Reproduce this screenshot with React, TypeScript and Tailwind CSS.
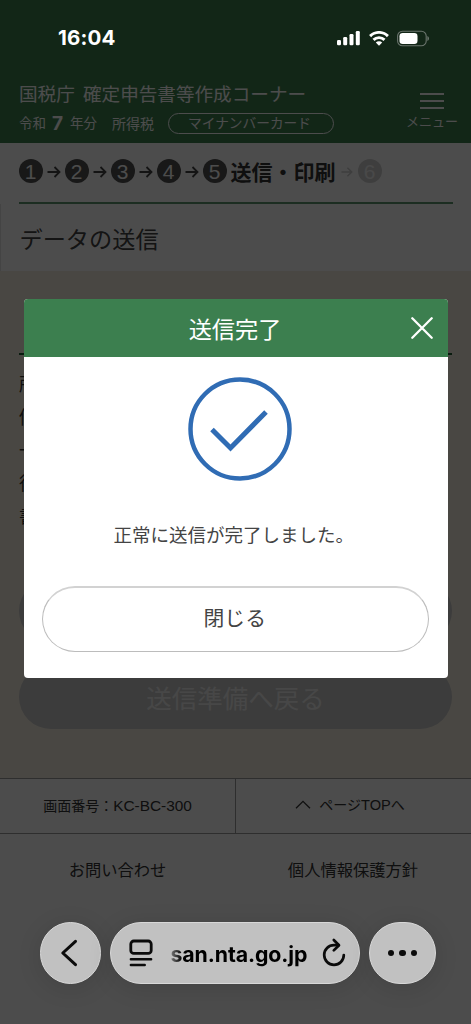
import { Fragment } from "react";

const steps = [1, 2, 3, 4, 5];
const bodyLines = ["所", "修", "一", "後", "書"];

function StepNumber({ value, muted = false }: { value: number; muted?: boolean }) {
  return (
    <div
      className={
        muted
          ? "flex size-6 shrink-0 items-center justify-center rounded-full bg-[#d0d0d0] text-[21px] leading-none text-[#f4f4f4]"
          : "flex size-6 shrink-0 items-center justify-center rounded-full bg-[#505050] text-[21px] leading-none text-white"
      }
    >
      <span className="font-['Liberation_Sans',sans-serif]">{value}</span>
    </div>
  );
}

function StepArrow({ className }: { className: string }) {
  return (
    <svg viewBox="0 0 14 12" className={className} fill="none" stroke="currentColor" strokeWidth="1.8">
      <path d="M0.5 6h12M7.5 1l5 5-5 5" />
    </svg>
  );
}

function StatusBar() {
  return (
    <div className="absolute inset-x-0 top-0 flex h-[76px] items-center justify-between pr-[41px] pl-[58px] text-white">
      <span className="pt-px font-['Inter',sans-serif] text-[20.5px] leading-none font-bold tracking-[0.2px]">16:04</span>
      <div className="flex items-center">
        <svg width="24" height="16" viewBox="0 0 24 16" fill="currentColor">
          <rect x="0" y="10" width="4" height="5.3" rx="1.2" />
          <rect x="6.2" y="7" width="4" height="8.3" rx="1.2" />
          <rect x="12.5" y="4" width="4" height="11.3" rx="1.2" />
          <rect x="18.8" y="1" width="4" height="14.3" rx="1.2" />
        </svg>
        <svg width="20" height="15" viewBox="0 0 20 15" className="ml-2" fill="none" stroke="currentColor" strokeWidth="2.9">
          <path d="M1.1 5.1a12.6 12.6 0 0 1 17.8 0" />
          <path d="M4.5 8.9a7.8 7.8 0 0 1 11 0" />
          <path d="M10 14.8 6.8 11.6a4.5 4.5 0 0 1 6.4 0z" fill="currentColor" stroke="none" />
        </svg>
        <svg width="33" height="17" viewBox="0 0 33 17" className="ml-2">
          <rect x="0.6" y="1.2" width="28.6" height="14.6" rx="4.8" fill="none" stroke="#6b756e" strokeWidth="1.1" />
          <rect x="2.5" y="3" width="18" height="11" rx="3.2" fill="#fff" />
          <path d="M30.4 6v5c1-.4 1.6-1.4 1.6-2.5S31.4 6.4 30.4 6z" fill="#6b756e" />
        </svg>
      </div>
    </div>
  );
}

function Dialog() {
  return (
    <div className="absolute top-[299px] left-[23.5px] h-[379px] w-[424px] overflow-hidden rounded-[4px] bg-white text-[#444]">
      <div className="relative flex h-[57.5px] items-center justify-center bg-[#3c7f4f] pt-px pr-px text-[23.2px] leading-none text-white">
        <h2>送信完了</h2>
        <svg
          viewBox="0 0 22 22"
          className="absolute top-[18px] right-[15px] size-[22px]"
          stroke="currentColor"
          strokeWidth="2.3"
          strokeLinecap="round"
        >
          <path d="M1.3 1.3l19.4 19.4M20.7 1.3 1.3 20.7" />
        </svg>
      </div>
      <div className="flex flex-col items-center pr-[19px] pl-[18.5px]">
        <svg width="104" height="104" viewBox="0 0 104 104" className="mt-[20.5px] ml-[10px]" fill="none" stroke="#306cb4">
          <circle cx="52" cy="52" r="49.5" strokeWidth="4.5" />
          <path d="M24 52.5 42.5 71 78 35" strokeWidth="5" />
        </svg>
        <p className="mt-[42.5px] mr-[3px] h-[20px] text-[18.5px] leading-[20px] whitespace-nowrap">正常に送信が完了しました。</p>
        <button className="mt-[42.5px] h-[66px] w-full rounded-full border border-t-2 border-[#bcbcbc] border-t-[#d2d2d2] pr-px pb-[4px] text-[20.8px] leading-none">
          閉じる
        </button>
      </div>
    </div>
  );
}

function BrowserBar() {
  return (
    <div className="absolute inset-x-0 top-[922px] flex h-[62px] justify-start gap-[9px] pl-[39.5px] text-[#0b0b0b]">
      <div className="flex w-[61.5px] items-center justify-center rounded-full border border-[#d8d8d8] bg-[#c1c1c1] pr-[3px] shadow-[0_4px_24px_rgba(0,0,0,0.12)]">
        <svg width="18" height="28" viewBox="0 0 18 28" fill="none" stroke="currentColor" strokeWidth="3" strokeLinecap="round" strokeLinejoin="round">
          <path d="M15.5 2.3 2.8 14l12.7 11.7" />
        </svg>
      </div>
      <div className="flex w-[250px] items-center rounded-full border border-[#d8d8d8] bg-[#c1c1c1] pl-[18px] shadow-[0_4px_24px_rgba(0,0,0,0.12)]">
        <svg width="24" height="28" viewBox="0 0 24 28" fill="none" stroke="currentColor" strokeWidth="2.8" strokeLinecap="round">
          <rect x="1.8" y="2" width="20.4" height="12.4" rx="3" />
          <path d="M1.9 20.3h20.2M1.9 26h13.8" strokeWidth="2.5" />
        </svg>
        <span className="ml-[17.5px] w-[140px] bg-linear-to-r from-[#777] to-[#000] to-10% bg-clip-text pt-px font-['Inter',sans-serif] text-[21.3px] leading-[30px] font-bold tracking-[-0.1px] whitespace-nowrap text-transparent">
          san.nta.go.jp
        </span>
        <svg width="24" height="29" viewBox="0 0 24 29" className="mb-[2px] ml-[11.5px]" fill="none" stroke="currentColor" strokeWidth="2.7" strokeLinecap="round" strokeLinejoin="round">
          <path d="M16.5 7.2H12a9.8 9.8 0 1 0 9.8 9.8" />
          <path d="M11.8 2l5.2 5.2-5.2 5.2" />
        </svg>
      </div>
      <div className="flex w-[67px] items-center justify-center gap-[5px] rounded-full border border-[#d8d8d8] bg-[#c1c1c1] shadow-[0_4px_24px_rgba(0,0,0,0.12)]">
        <i className="size-[6.5px] rounded-full bg-current" />
        <i className="size-[6.5px] rounded-full bg-current" />
        <i className="size-[6.5px] rounded-full bg-current" />
      </div>
    </div>
  );
}

export default function App() {
  return (
    <div className="relative h-[1024px] w-[471px] overflow-hidden bg-white font-['Noto_Sans_CJK_JP',sans-serif] leading-none text-[#444]">
      {/* Header */}
      <header className="flex h-[143px] justify-between bg-[#3c7f4f] pt-[83px] pr-[13px] pl-[19px] text-white">
        <div>
          <h1 className="h-5 text-[18.6px] leading-5 whitespace-nowrap [word-spacing:4px]">国税庁 確定申告書等作成コーナー</h1>
          <div className="mt-[10px] flex h-[21px] items-center whitespace-nowrap">
            <span className="pb-px text-[13.5px]">令和</span>
            <span className="mr-[5px] ml-[6px] w-[13px] pb-px font-['Inter',sans-serif] text-[19px] font-bold">7</span>
            <span className="pb-px text-[13.5px]">年分</span>
            <span className="ml-[15px] pb-px text-[14px]">所得税</span>
            <span className="ml-[14px] flex h-[20.5px] w-[166px] items-center justify-center rounded-full border border-white pr-[3px] pb-[2px] text-[13.7px]">
              マイナンバーカード
            </span>
          </div>
        </div>
        <div className="flex flex-col items-center pt-[10px]">
          <div className="flex w-[24px] flex-col gap-[5px]">
            <i className="h-[2px] bg-white" />
            <i className="h-[2px] bg-white" />
            <i className="h-[2px] bg-white" />
          </div>
          <span className="mt-[5px] text-[13px]">メニュー</span>
        </div>
      </header>

      {/* Steps */}
      <div className="mx-[18.5px] flex h-[61px] items-center border-b-2 border-[#5f9670] pb-[3px]">
        {steps.map((step) => (
          <Fragment key={step}>
            <StepNumber value={step} />
            {step < 5 && <StepArrow className="mx-1 mt-px h-3 w-3.5 text-[#444]" />}
          </Fragment>
        ))}
        <span className="ml-[4px] text-[21px] font-bold whitespace-nowrap text-[#333]">送信・印刷</span>
        <StepArrow className="mt-px mr-[5px] ml-[5px] h-3 w-3 text-[#cfcfcf]" />
        <StepNumber value={6} muted />
      </div>
      <div className="flex h-[67px] items-center border-l border-[#e4e4e4] pt-[3px] pl-[18.5px] text-[23.2px]">データの送信</div>

      {/* Main */}
      <main className="h-[507px] bg-[#f5efe0] px-[19px] pt-[82px]">
        <div className="h-[226px] border-t-2 border-[#1d5c31] pt-[12px] text-[18px] leading-[33px] text-[#333]">
          {bodyLines.map((line) => (
            <p key={line}>{line}</p>
          ))}
        </div>
        <div className="h-[64px] rounded-full bg-[#c8c8c8]" />
        <div className="mt-[22px] flex h-[64px] items-center justify-center rounded-full bg-[#c8c8c8] text-[25.5px] text-[#efefef]">
          送信準備へ戻る
        </div>
      </main>

      {/* Footer */}
      <footer className="text-[#333]">
        <div className="flex h-[56px] border-y border-[#999] text-[14px]">
          <div className="flex w-[236px] items-center justify-center border-r border-[#999] pb-px">
            <span className="whitespace-nowrap">
              画面番号：<span className="font-['Liberation_Sans',sans-serif] text-[15.4px]">KC-BC-300</span>
            </span>
          </div>
          <div className="flex w-[235px] items-center justify-center pr-[7px] pb-[2px]">
            <svg width="16" height="9" viewBox="0 0 16 9" className="mr-[8px] mb-px" fill="none" stroke="currentColor" strokeWidth="1.3">
              <path d="M1 8.3 8 1.3l7 7" />
            </svg>
            <span className="whitespace-nowrap">
              ページ<span className="font-['Liberation_Sans',sans-serif] text-[14.6px]">TOP</span>へ
            </span>
          </div>
        </div>
        <div className="flex pt-[27px] text-[16.3px]">
          <span className="w-[235px] text-center">お問い合わせ</span>
          <span className="w-[236px] text-center">個人情報保護方針</span>
        </div>
      </footer>

      <div className="absolute inset-0 bg-black/70" />
      <StatusBar />
      <Dialog />
      <BrowserBar />
    </div>
  );
}
